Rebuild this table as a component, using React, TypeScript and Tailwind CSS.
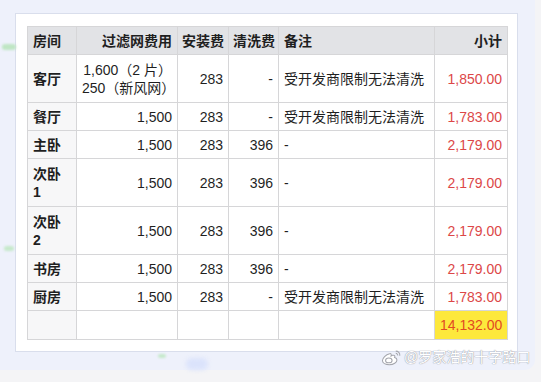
import React from 'react';

type Row = {
  room: React.ReactNode;
  filter: React.ReactNode;
  install: string;
  clean: string;
  note: string;
  subtotal: string;
  tall?: boolean;
};

const rows: Row[] = [
  {
    room: '客厅',
    filter: (
      <>
        1,600（2 片）
        <br />
        250（新风网）
      </>
    ),
    install: '283',
    clean: '-',
    note: '受开发商限制无法清洗',
    subtotal: '1,850.00',
    tall: true,
  },
  { room: '餐厅', filter: '1,500', install: '283', clean: '-', note: '受开发商限制无法清洗', subtotal: '1,783.00' },
  { room: '主卧', filter: '1,500', install: '283', clean: '396', note: '-', subtotal: '2,179.00' },
  {
    room: (
      <>
        次卧
        <br />1
      </>
    ),
    filter: '1,500',
    install: '283',
    clean: '396',
    note: '-',
    subtotal: '2,179.00',
    tall: true,
  },
  {
    room: (
      <>
        次卧
        <br />2
      </>
    ),
    filter: '1,500',
    install: '283',
    clean: '396',
    note: '-',
    subtotal: '2,179.00',
    tall: true,
  },
  { room: '书房', filter: '1,500', install: '283', clean: '396', note: '-', subtotal: '2,179.00' },
  { room: '厨房', filter: '1,500', install: '283', clean: '-', note: '受开发商限制无法清洗', subtotal: '1,783.00' },
];

const cell = 'border border-[#d6d6d8] px-[5px] py-0 align-middle whitespace-nowrap';

const App = (): React.JSX.Element => {
  return (
    <div
      className="h-[382px] w-[541px] overflow-hidden bg-[#f4f4f6] text-[14px] leading-[18px] text-[#1f1f1f]"
      style={{ fontFamily: '"Liberation Sans", "Noto Sans CJK SC", sans-serif' }}
    >
      <div className="relative h-[370px] w-[535px] rounded-br-[10px] bg-[#eef1fb] pl-[15px] pt-[13px]">
        {/* decorations */}
        <div className="absolute left-[2px] top-[44px] h-[6px] w-[14px] rounded-full bg-[#bfe6c4] blur-[1px]" />
        <div className="absolute left-[4px] top-[246px] h-[5px] w-[10px] rounded-full bg-[#c6e9cb] blur-[1px]" />
        <div className="absolute left-[158px] top-[354px] h-[4px] w-[8px] rounded-full bg-[#c6e9cb] blur-[1px]" />
        <div className="absolute left-[186px] top-[358px] h-[12px] w-[22px] rounded-full bg-[#dbe3fb] blur-[2px]" />

        {/* card */}
        <div className="h-[339px] w-[503px] border border-[#d9deec] bg-white pl-[11px] pt-[12px]">
          <table className="w-[480px] table-fixed border-collapse">
            <colgroup>
              <col className="w-[49px]" />
              <col className="w-[101px]" />
              <col className="w-[51px]" />
              <col className="w-[50px]" />
              <col className="w-[156px]" />
              <col className="w-[73px]" />
            </colgroup>
            <thead>
              <tr className="h-[28px] bg-[#e2e3e6] font-semibold">
                <th className={`${cell} text-left`}>房间</th>
                <th className={`${cell} text-right`}>过滤网费用</th>
                <th className={`${cell} !px-[4px] text-right`}>安装费</th>
                <th className={`${cell} !px-[4px] text-right`}>清洗费</th>
                <th className={`${cell} text-left`}>备注</th>
                <th className={`${cell} text-right`}>小计</th>
              </tr>
            </thead>
            <tbody>
              {rows.map((r, i) => (
                <tr key={i} className={r.tall ? 'h-[48px]' : 'h-[28px]'}>
                  <td className={`${cell} bg-[#f7f7f8] text-left font-semibold`}>{r.room}</td>
                  <td className={`${cell} text-right`}>{r.filter}</td>
                  <td className={`${cell} text-right`}>{r.install}</td>
                  <td className={`${cell} text-right`}>{r.clean}</td>
                  <td className={`${cell} text-left`}>{r.note}</td>
                  <td className={`${cell} text-right text-[#dc4748]`}>{r.subtotal}</td>
                </tr>
              ))}
              <tr className="h-[29px]">
                <td className={`${cell} bg-[#f7f7f8]`} />
                <td className={cell} />
                <td className={cell} />
                <td className={cell} />
                <td className={cell} />
                <td className={`${cell} bg-[#fde83c] text-right text-[#e24a22]`}>14,132.00</td>
              </tr>
            </tbody>
          </table>
        </div>

        {/* watermark */}
        <div className="absolute left-[381px] top-[348px] flex items-center gap-[2px] text-[14px] text-white [text-shadow:0_0_1px_#9a9ca4,0_0_1px_#9a9ca4]">
          <svg width="21" height="17" viewBox="0 0 22 17" fill="none" stroke="#a4a6ad" strokeWidth="1.1">
            <path d="M9 4.5c-4 1-7.5 4.5-7.5 7.2 0 2.6 3.3 4.3 7.2 4.3 4.6 0 8-2.4 8-4.9 0-1.8-1.8-2.3-2.5-2.5.6-1.4.4-3-2-2.4-1 .3-1.6.7-1.6.7.4-1.6-.2-3.1-1.6-2.4z" fill="#fff" />
            <ellipse cx="8.2" cy="11.6" rx="3.4" ry="2.5" />
            <path d="M15.5 1.8c2.5 0 4.5 2 4.2 4.8M15.5 4.2c1.2 0 2.2 1 2 2.2" />
          </svg>
          <span>@罗家浩的十字路口</span>
        </div>
      </div>
    </div>
  );
};

export default App;
